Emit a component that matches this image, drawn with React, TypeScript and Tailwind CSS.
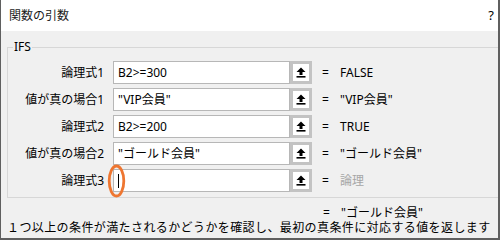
import React from "react";

type Arg = {
  label: string;
  value: string;
  result: string;
  placeholder?: boolean;
};

const args: Arg[] = [
  { label: "論理式1", value: "B2>=300", result: "FALSE" },
  { label: "値が真の場合1", value: "\"VIP会員\"", result: "\"VIP会員\"" },
  { label: "論理式2", value: "B2>=200", result: "TRUE" },
  { label: "値が真の場合2", value: "\"ゴールド会員\"", result: "\"ゴールド会員\"" },
  { label: "論理式3", value: "", result: "論理", placeholder: true },
];

function RefIcon() {
  return (
    <svg width="10" height="11" viewBox="0 0 10 11">
      <path d="M5 0.5 L9.5 5 L6.5 5 L6.5 8 L3.5 8 L3.5 5 L0.5 5 Z" fill="#000" />
      <rect x="0.5" y="9" width="9" height="1.6" fill="#000" />
    </svg>
  );
}

function ArgRow({ arg, focused }: { arg: Arg; focused: boolean }) {
  return (
    <div className="flex items-center h-[23px]">
      <div className="w-[96px] text-right whitespace-nowrap">{arg.label}</div>
      <div className="ml-[9px] relative flex h-[23px] w-[177px] items-center border border-[#b7b7b7] bg-white pl-[4px]">
        {arg.value}
        {focused && (
          <>
            <span className="h-[14px] w-px bg-black" />
            {/* orange highlight around the caret */}
            <svg
              className="absolute left-[-7px] top-[-6px]"
              width="19"
              height="34"
              viewBox="0 0 19 34"
            >
              <ellipse cx="9.5" cy="17" rx="7.3" ry="15" fill="none" stroke="#ee7631" strokeWidth="2.8" />
            </svg>
          </>
        )}
      </div>
      <div className="flex h-[23px] w-[22px] items-center justify-center border-[3px] border-[#c3c3c3] bg-white">
        <RefIcon />
      </div>
      <div className="ml-[10px] w-[18px]">=</div>
      <div className={arg.placeholder ? "text-[#a6a6a6]" : ""}>{arg.result}</div>
    </div>
  );
}

export default function App() {
  return (
    <div
      className="flex h-[240px] w-[500px] flex-col overflow-hidden border-b-2 border-l border-r-2 border-[#5f5f5f] text-[12px] leading-[15px] text-black"
      style={{ fontFamily: '"Noto Sans", "Noto Sans CJK JP", sans-serif' }}
    >
      {/* title bar */}
      <div className="flex h-[31px] shrink-0 items-center justify-between bg-white pl-[8px] pr-[4px]">
        <span className="text-[#1a1a1a]">関数の引数</span>
        <span className="text-[13px]">?</span>
      </div>

      <div className="flex-1 bg-[#f0f0f0] pl-[6px] pt-[16px]">
        {/* group box */}
        <div className="relative -mr-[20px] border-b border-l border-t border-[#d7d7d7] pb-[5px] pt-[13px]">
          <span className="absolute left-[5px] top-[-9px] bg-[#f0f0f0] px-px">IFS</span>
          <div className="flex flex-col gap-[4px]">
            {args.map((a, i) => (
              <ArgRow key={i} arg={a} focused={i === args.length - 1} />
            ))}
          </div>
        </div>

        <div className="mt-[7px] flex h-[14px] items-center pl-[316px]">
          <div className="w-[18px]">=</div>
          <div>"ゴールド会員"</div>
        </div>
        <div className="mt-[1px] whitespace-nowrap tracking-[0.4px]">
          １つ以上の条件が満たされるかどうかを確認し、最初の真条件に対応する値を返します
        </div>
      </div>
    </div>
  );
}
